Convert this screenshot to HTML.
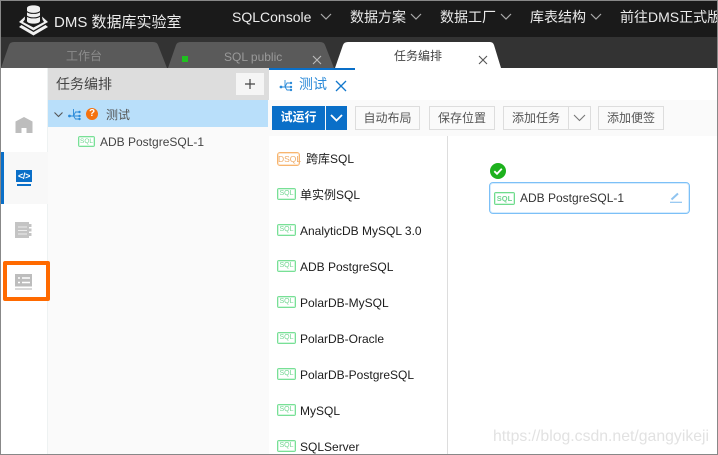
<!DOCTYPE html>
<html>
<head>
<meta charset="utf-8">
<style>
html,body{margin:0;padding:0;width:718px;height:455px;overflow:hidden;background:#fff}
body{position:relative;font-family:"Liberation Sans","Noto Sans CJK SC",sans-serif;font-size:12px;color:#333}
.a{position:absolute;white-space:nowrap}
.nav{color:#ececec;font-size:14px;top:7px;line-height:20px}
.btn{position:absolute;top:106px;height:24px;box-sizing:border-box;border:1px solid #ddd;background:#fafafa;color:#555;text-align:center;line-height:22px;font-size:12px}
.sql{position:absolute;width:19px;height:12px;box-sizing:border-box;border:1px solid #78e096;box-shadow:inset 0 0 0 1px rgba(130,225,160,.35);border-radius:2px;color:#6fd58f;font-size:7px;line-height:10px;text-align:center;background:#fff}
.it{position:absolute;left:300px;font-size:12px;line-height:16px;color:#1c1c1c;white-space:nowrap}
svg{position:absolute;overflow:visible}
</style>
</head>
<body>
<!-- top bar -->
<div class="a" style="left:0;top:0;width:718px;height:37px;background:#1a1a1a"></div>
<div class="a" style="left:0;top:37px;width:718px;height:31px;background:#333"></div>

<!-- logo -->
<svg style="left:18px;top:4px" width="32" height="33" viewBox="0 0 32 33">
<path d="M9 4C9 .5 22 .5 22 4V17C22 20.500 9 20.500 9 17Z" fill="#f0f0f0"/>
<path d="M9 7.500C11 10 20 10 22 7.500M9 12C11 14.500 20 14.500 22 12" stroke="#1a1a1a" stroke-width="1.100" fill="none"/>
<path d="M7 12.500L1 18L15.500 26.500L30 18L24 12.500L24.500 15.500L26 18L15.500 23.500L5 18L6.800 15.500Z" fill="#f0f0f0"/>
<path d="M3.500 21L1 23L15.500 31.500L30 23L27.500 21L15.500 28Z" fill="#f0f0f0"/>
</svg>
<div class="a" style="left:54px;top:13px;color:#ececec;font-size:15px;line-height:19px">DMS 数据库实验室</div>

<div class="a nav" style="left:232px">SQLConsole</div>
<svg style="left:320px;top:13px" width="12" height="8"><path d="M1 1L6 6L11 1" stroke="#aaa" stroke-width="1.200" fill="none"/></svg>
<div class="a nav" style="left:350px">数据方案</div>
<svg style="left:410px;top:13px" width="12" height="8"><path d="M1 1L6 6L11 1" stroke="#aaa" stroke-width="1.200" fill="none"/></svg>
<div class="a nav" style="left:440px">数据工厂</div>
<svg style="left:500px;top:13px" width="12" height="8"><path d="M1 1L6 6L11 1" stroke="#aaa" stroke-width="1.200" fill="none"/></svg>
<div class="a nav" style="left:530px">库表结构</div>
<svg style="left:590px;top:13px" width="12" height="8"><path d="M1 1L6 6L11 1" stroke="#aaa" stroke-width="1.200" fill="none"/></svg>
<div class="a nav" style="left:620px">前往DMS正式版</div>

<!-- tabs -->
<svg style="left:0;top:42px" width="718" height="26">
<path d="M1 26L9 3Q10 0 14 0H153Q157 0 158 3L167 26Z" fill="#5a5a5a"/>
<path d="M168 26L176 3Q177 0 181 0H320Q324 0 325 3L334 26Z" fill="#5a5a5a"/>
<path d="M335 26L343 3Q344 0 348 0H490Q493 0 494 3L501 26Z" fill="#fff"/>
</svg>
<div class="a" style="left:66px;top:48px;color:#8c8c8c;font-size:12px;line-height:16px">工作台</div>
<div class="a" style="left:182px;top:56px;width:6px;height:6px;background:#1fc01f"></div>
<div class="a" style="left:224px;top:49px;color:#9a9a9a;font-size:12px;line-height:16px">SQL public</div>
<svg style="left:312px;top:55px" width="10" height="10"><path d="M1 1L9 9M9 1L1 9" stroke="#bbb" stroke-width="1.100"/></svg>
<div class="a" style="left:394px;top:48px;color:#444;font-size:12px;line-height:16px">任务编排</div>
<svg style="left:478px;top:55px" width="10" height="10"><path d="M1 1L9 9M9 1L1 9" stroke="#555" stroke-width="1.100"/></svg>

<!-- panel -->
<div class="a" style="left:48px;top:68px;width:221px;height:387px;background:#fafafa"></div>
<div class="a" style="left:48px;top:68px;width:221px;height:32px;background:#ddd"></div>
<div class="a" style="left:56px;top:75px;font-size:14px;line-height:18px;color:#444">任务编排</div>
<div class="a" style="left:236px;top:73px;width:28px;height:22px;background:#f5f5f5"></div>
<svg style="left:245px;top:79px" width="10" height="10"><path d="M5 0V10M0 5H10" stroke="#444" stroke-width="1.200"/></svg>
<div class="a" style="left:48px;top:100px;width:220px;height:27px;background:#b9dffa"></div>
<svg style="left:54px;top:112px" width="9" height="6"><path d="M.5 .5L4.500 4.500L8.500 .5" stroke="#555" stroke-width="1.100" fill="none"/></svg>
<svg style="left:68px;top:108px" width="13" height="12" viewBox="0 0 13 12"><path d="M1.500 8H11.500M5.500 1V8M5.500 8L7.500 4H11.500M5.500 8L7.500 11H11.500" stroke="#2b8ad8" stroke-width=".9" fill="none"/><circle cx="1.500" cy="8" r="1.400" fill="#2b8ad8"/><circle cx="11.500" cy="4" r="1.200" fill="#2b8ad8"/><circle cx="11.500" cy="8" r="1.200" fill="#2b8ad8"/><circle cx="11.500" cy="11" r="1.200" fill="#2b8ad8"/></svg>
<div class="a" style="left:86px;top:108px;width:12px;height:12px;border-radius:50%;background:#f5720f;color:#fff;font-size:10px;font-weight:bold;line-height:12px;text-align:center">?</div>
<div class="a" style="left:106px;top:107px;font-size:12px;line-height:16px;color:#555">测试</div>
<div class="sql" style="left:78px;top:136px;width:17px;height:11px;line-height:9px;font-size:6.500px">SQL</div>
<div class="a" style="left:100px;top:134px;font-size:12px;line-height:16px;color:#444">ADB PostgreSQL-1</div>

<!-- sidebar -->
<div class="a" style="left:47px;top:68px;width:1px;height:387px;background:#eef2f2"></div>
<div class="a" style="left:1px;top:152px;width:47px;height:52px;background:#f8f8f8"></div>
<div class="a" style="left:1px;top:152px;width:3px;height:52px;background:#0a6fc8"></div>
<svg style="left:15px;top:117px" width="18" height="16" viewBox="0 0 18 16"><path d="M9 0L17.500 4.500V16H11.500V11H6.500V16H.5V4.500Z" fill="#bdbdbd"/></svg>
<div class="a" style="left:16px;top:170px;width:16px;height:12px;background:#0a6fc8;color:#fff;font-size:9px;font-weight:bold;line-height:12px;text-align:center;letter-spacing:-.3px">&lt;/&gt;</div>
<div class="a" style="left:17px;top:184px;width:14px;height:1.500px;background:#0a6fc8"></div>
<svg style="left:15px;top:222px" width="17" height="16" viewBox="0 0 17 16"><path d="M0 0H14V2H16.500V5H14V6.500H16.500V9.500H14V11H16.500V14H14V16H0Z" fill="#c4c4c4"/><path d="M3 5H12M3 8.500H12M3 12H12" stroke="#ececec" stroke-width="1.100"/></svg>
<div class="a" style="left:3px;top:261px;width:47px;height:40px;box-sizing:border-box;border:4px solid #ff6a00;border-radius:2px;background:#fff"></div>
<svg style="left:15px;top:274px" width="17" height="16" viewBox="0 0 17 16"><path d="M0 0H17V12.500H0Z" fill="#bdbdbd"/><path d="M0 15H17" stroke="#ccc" stroke-width="1.500"/><path d="M3 4H5M7 4H15M3 8.500H5M7 8.500H15" stroke="#fff" stroke-width="1.500"/></svg>

<!-- tab strip -->
<div class="a" style="left:269px;top:68px;width:86px;height:2px;background:#0a6fc8"></div>
<svg style="left:279px;top:79px" width="14" height="12" viewBox="0 0 13 12"><path d="M1.500 8H11.500M5.500 1V8M5.500 8L7.500 4H11.500M5.500 8L7.500 11H11.500" stroke="#2b8ad8" stroke-width=".9" fill="none"/><circle cx="1.500" cy="8" r="1.400" fill="#2b8ad8"/><circle cx="11.500" cy="4" r="1.200" fill="#2b8ad8"/><circle cx="11.500" cy="8" r="1.200" fill="#2b8ad8"/><circle cx="11.500" cy="11" r="1.200" fill="#2b8ad8"/></svg>
<div class="a" style="left:299px;top:75px;font-size:14px;line-height:19px;color:#2b8ad8">测试</div>
<svg style="left:336px;top:81px" width="10" height="10"><path d="M0 0L10 10M10 0L0 10" stroke="#1278cc" stroke-width="1.300"/></svg>

<!-- toolbar -->
<div class="a" style="left:269px;top:100px;width:449px;height:36px;background:#fafafa"></div>
<div class="a" style="left:272px;top:106px;width:53px;height:24px;background:#0a6fc8;color:#fff;font-size:12px;font-weight:bold;line-height:23px;text-align:center">试运行</div>
<div class="a" style="left:326px;top:106px;width:21px;height:24px;background:#0a6fc8"></div>
<svg style="left:330px;top:114px" width="13" height="8"><path d="M1 1L6.500 6.500L12 1" stroke="#fff" stroke-width="1.800" fill="none"/></svg>
<div class="btn" style="left:355px;width:65px">自动布局</div>
<div class="btn" style="left:429px;width:66px">保存位置</div>
<div class="btn" style="left:503px;width:66px">添加任务</div>
<div class="btn" style="left:568px;width:23px"></div>
<svg style="left:573px;top:114px" width="13" height="8"><path d="M1 1L6.500 6.500L12 1" stroke="#777" stroke-width="1.100" fill="none"/></svg>
<div class="btn" style="left:598px;width:66px">添加便签</div>

<!-- list -->
<div class="a" style="left:447px;top:136px;width:1px;height:319px;background:#ddd"></div>
<div class="sql" style="left:277px;top:152px;width:23px;height:14px;border-color:#f8b56e;box-shadow:inset 0 0 0 1px rgba(248,181,110,.35);border-radius:3px;color:#eeaa66;line-height:12px;font-size:8.500px">DSQL</div>
<div class="it" style="left:306px;top:151px">跨库SQL</div>
<div class="sql" style="left:277px;top:188px">SQL</div>
<div class="it" style="top:187px">单实例SQL</div>
<div class="sql" style="left:277px;top:224px">SQL</div>
<div class="it" style="top:223px">AnalyticDB MySQL 3.0</div>
<div class="sql" style="left:277px;top:260px">SQL</div>
<div class="it" style="top:259px">ADB PostgreSQL</div>
<div class="sql" style="left:277px;top:296px">SQL</div>
<div class="it" style="top:295px">PolarDB-MySQL</div>
<div class="sql" style="left:277px;top:332px">SQL</div>
<div class="it" style="top:331px">PolarDB-Oracle</div>
<div class="sql" style="left:277px;top:368px">SQL</div>
<div class="it" style="top:367px">PolarDB-PostgreSQL</div>
<div class="sql" style="left:277px;top:404px">SQL</div>
<div class="it" style="top:403px">MySQL</div>
<div class="sql" style="left:277px;top:440px">SQL</div>
<div class="it" style="top:439px">SQLServer</div>

<!-- node -->
<svg style="left:490px;top:163px" width="16" height="16"><circle cx="8" cy="8" r="8" fill="#1db11d"/><path d="M4.300 8.200L7 10.800L11.800 5.800" stroke="#fff" stroke-width="1.800" fill="none"/></svg>
<div class="a" style="left:489px;top:182px;width:201px;height:32px;box-sizing:border-box;border:1px solid #7cc0f7;box-shadow:inset 0 0 0 1px rgba(124,192,247,.3);border-radius:4px;background:#fff"></div>
<div class="sql" style="left:494px;top:192px;width:21px;height:13px;line-height:11px;font-size:7.500px;font-weight:bold;border-color:#6fdc8c">SQL</div>
<div class="a" style="left:520px;top:191px;font-size:12px;line-height:15px;color:#333">ADB PostgreSQL-1</div>
<svg style="left:670px;top:192px" width="12" height="11" viewBox="0 0 12 11"><path d="M1.500 7.500L8 1.500" stroke="#8fc4f0" stroke-width="2" fill="none"/><path d="M0 10.300H12" stroke="#8fc4f0" stroke-width="1.200"/></svg>

<!-- watermark -->
<div class="a" style="left:493px;top:427px;font-size:15.800px;line-height:20px;color:#e2e2e2">https://blog.csdn.net/gangyikeji</div>

<!-- outer border -->
<div class="a" style="left:0;top:0;width:718px;height:455px;box-sizing:border-box;border:1px solid #888;pointer-events:none"></div>
</body>
</html>
